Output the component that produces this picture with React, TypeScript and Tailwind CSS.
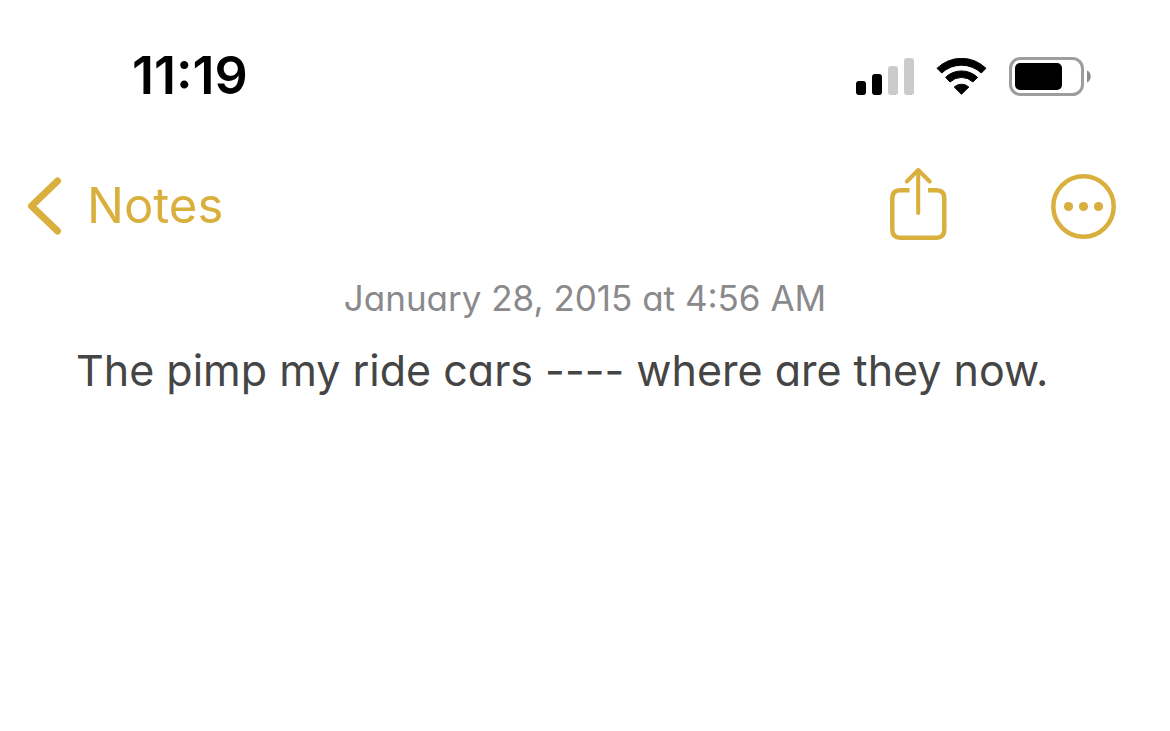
const StatusBar = () => {
    return (
        <div className="flex h-[152px] items-center justify-between pl-[132px] pr-[79px]">
            <time className="text-[52px] font-semibold text-black">11:19</time>
            <div className="flex items-center gap-[22px]">
                <svg width="58" height="37" viewBox="0 0 58 37" role="img" aria-label="Signal">
                    <rect x="0" y="23" width="10" height="14" rx="3" fill="#000" />
                    <rect x="16" y="16" width="10" height="21" rx="3" fill="#000" />
                    <rect x="32" y="8" width="10" height="29" rx="3" fill="#cbcbcb" />
                    <rect x="48" y="0" width="10" height="37" rx="3" fill="#cbcbcb" />
                </svg>
                <svg width="51" height="37" viewBox="0 0 51 37" role="img" aria-label="Wi-Fi">
                    <g fill="#000" stroke="#000" strokeWidth="1" strokeLinejoin="round">
                        <path d="M1 10.3 A35 35 0 0 1 50 10.3 L45.3 15 A29 29 0 0 0 5.7 15 Z" />
                        <path d="M9.5 19.4 A23 23 0 0 1 41.5 19.4 L36.9 24 A16.5 16.5 0 0 0 14.1 24 Z" />
                        <path d="M18.2 29 A11 11 0 0 1 32.8 29 L25.5 36.3 Z" />
                    </g>
                </svg>
                <svg width="82" height="39" viewBox="0 0 82 39" role="img" aria-label="Battery">
                    <rect x="1.5" y="1.5" width="72" height="36" rx="10" fill="none" stroke="#9d9d9d" strokeWidth="3" />
                    <rect x="6" y="6" width="47" height="27" rx="5" fill="#000" />
                    <path d="M78 13.5 C83 15.5 83 23.5 78 25.5 Z" fill="#8c8c8c" />
                </svg>
            </div>
        </div>
    );
};

const NavBar = () => {
    return (
        <nav className="flex h-[108px] items-center justify-between pl-[27px] pr-[53px] text-[#d9b03d]">
            <a href="#notes" className="flex items-center gap-[25px] text-[49px]">
                <svg width="35" height="58" viewBox="0 0 35 58" fill="none" stroke="currentColor" strokeWidth="7" strokeLinecap="round" strokeLinejoin="round" aria-hidden="true">
                    <path d="M30.5 4 L4.5 29 L30.5 54" />
                </svg>
                Notes
            </a>
            <div className="flex items-center gap-[102px]">
                <button type="button" aria-label="Share">
                    <svg width="60" height="80" viewBox="0 0 60 80" fill="none" stroke="currentColor" strokeWidth="4.5" aria-hidden="true">
                        <path d="M20.5 24.3 H11.3 Q3.3 24.3 3.3 32.3 V63.8 Q3.3 71.8 11.3 71.8 H47.3 Q55.3 71.8 55.3 63.8 V32.3 Q55.3 24.3 47.3 24.3 H39" />
                        <path d="M29.2 4.5 V47" strokeWidth="4" strokeLinecap="round" />
                        <path d="M17.8 15.5 L29.2 4 L40.7 15.5" strokeWidth="4" strokeLinecap="round" strokeLinejoin="round" />
                    </svg>
                </button>
                <button type="button" aria-label="More">
                    <svg width="66" height="66" viewBox="0 0 66 66" fill="none" aria-hidden="true">
                        <circle cx="32.5" cy="33.5" r="30.2" stroke="currentColor" strokeWidth="4.5" />
                        <g fill="currentColor">
                            <circle cx="17.5" cy="33.5" r="4.6" />
                            <circle cx="32.5" cy="33.5" r="4.6" />
                            <circle cx="47.5" cy="33.5" r="4.6" />
                        </g>
                    </svg>
                </button>
            </div>
        </nav>
    );
};

export default function App() {
    return (
        <div className="min-h-screen bg-white font-['Inter',sans-serif] [font-feature-settings:'cv11']">
            <StatusBar />
            <NavBar />
            <main className="pt-[18px]">
                <p className="text-center text-[35px] leading-[40px] text-[#8a8a8c]">January 28, 2015 at 4:56 AM</p>
                <p className="px-[76px] pt-[22px] text-[43px] leading-[60px] text-[#454545]">The pimp my ride cars ---- where are they now.</p>
            </main>
        </div>
    );
}
